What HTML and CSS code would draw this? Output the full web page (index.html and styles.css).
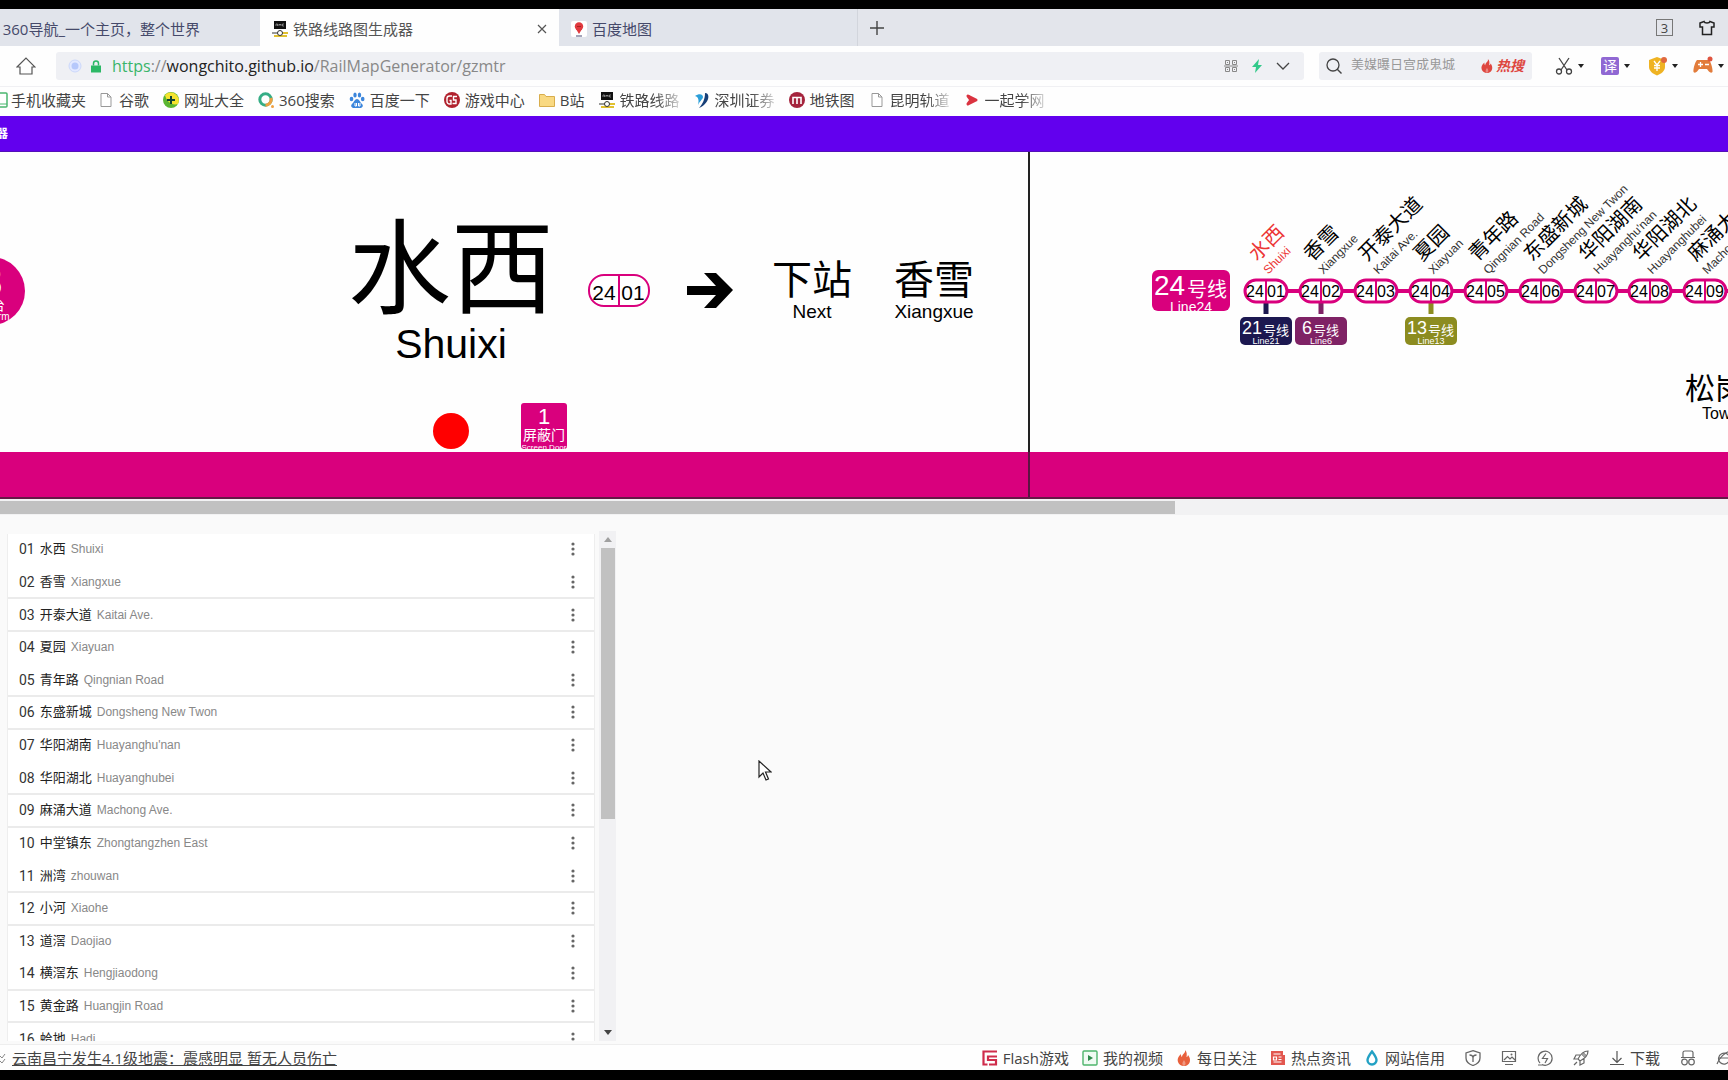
FILE: index.html
```html
<!DOCTYPE html>
<html lang="zh-CN">
<head>
<meta charset="utf-8">
<title>铁路线路图生成器</title>
<link rel="stylesheet" href="styles.css">
</head>
<body>
<svg class="defs" aria-hidden="true">
  <symbol id="i-rmg" viewBox="0 0 16 16"><path fill="#111" d="M2 0h12v8H2z"/><path d="M4 5V3h1.500v2M7 5V3l1 1 1-1v2M12 3h-1.500v2H12" stroke="#aaa" fill="none" stroke-width=".7"/><path fill="#999" d="M0 11h6v2H0z"/><path fill="#e0c030" d="M10 11h6v2h-6zM2 14h13v2H2z"/><circle cx="8" cy="12" r="2.500" fill="#fff" stroke="#333"/></symbol>
  <symbol id="i-page" viewBox="0 0 16 16"><path d="M3 1.500h6.500l3.500 3.500v9.500H3zM9.500 1.500V5H13" fill="#fff" stroke="#999"/></symbol>
  <symbol id="i-caret" viewBox="0 0 6 4"><path d="M0 0h6L3 4z" fill="#222"/></symbol>
  <symbol id="i-flame" viewBox="0 0 16 16"><path d="M9 0c1 3-3 4-3 7C5 6.500 5 5 5 4 2 7 1 9 2 12c1 2.500 3 4 6 4s6-2 6-6c0-2-1-4-2-5-.2 1-.6 2-1.500 2C11 4 11 2 9 0z" fill="currentColor"/><path d="M8 16c-3-2-1-4 0-6 1 2 3 4 0 6z" fill="#fff" opacity=".35"/></symbol>
  <symbol id="i-dots" viewBox="0 0 4 14"><circle cx="2" cy="2" r="1.600"/><circle cx="2" cy="7" r="1.600"/><circle cx="2" cy="12" r="1.600"/></symbol>
</svg>

<header class="browser">
  <nav class="tabs">
    <a class="tab tab-first" href="#"><span>360导航_一个主页，整个世界</span></a>
    <a class="tab tab-active" href="#"><svg class="i16"><use href="#i-rmg"/></svg><span>铁路线路图生成器</span>
      <svg class="tab-close" viewBox="0 0 10 10"><path d="M1 1l8 8M9 1L1 9" stroke="#555" stroke-width="1.200"/></svg></a>
    <a class="tab tab-map" href="#"><svg class="i16" viewBox="0 0 16 16"><rect width="16" height="16" rx="2" fill="#fff"/><circle cx="8" cy="5.500" r="4.200" fill="#e0393e"/><path d="M5 8l3 5 3-5z" fill="#e0393e"/><path d="M5 15h6" stroke="#668" stroke-width="1.200"/><path d="M6 5.500h4" stroke="#a22"/></svg><span>百度地图</span></a>
    <button class="plain" aria-label="新标签页"><svg class="plus" viewBox="0 0 14 14"><path d="M7 0v14M0 7h14" stroke="#444" stroke-width="1.400"/></svg></button>
    <div class="tabs-right"><span class="count">3</span>
      <svg class="i16" viewBox="0 0 16 16"><path d="M1 3l4-1.500c.5 2 5.500 2 6 0L15 3v4h-2.500v7.500h-9V7H1z" fill="none" stroke="#222" stroke-width="1.500"/></svg></div>
  </nav>

  <div class="address">
    <button class="plain home" aria-label="主页"><svg class="i20" viewBox="0 0 20 20"><path d="M1 11L10 2l9 9h-3v7H4v-7z" fill="none" stroke="#555" stroke-width="1.200"/></svg></button>
    <div class="url">
      <svg class="i14" viewBox="0 0 14 14"><circle cx="7" cy="7" r="6" fill="#e3e9ff" stroke="#ccd8fb"/><circle cx="7" cy="7" r="3.500" fill="#b6c8fb"/></svg>
      <svg class="lock" viewBox="0 0 10 12"><path d="M0 5h10v7H0z" fill="#2cb866"/><path d="M2.500 5V3a2.500 2.500 0 015 0v2" fill="none" stroke="#2cb866" stroke-width="1.500"/></svg>
      <span class="url-text"><span class="scheme">https</span><span class="dim">://</span><b>wongchito.github.io</b><span class="dim">/RailMapGenerator/gzmtr</span></span>
      <svg class="i14 push" viewBox="0 0 14 14"><path d="M1.500 1.500h4v4h-4zM8.500 1.500h4v4h-4zM1.500 8.500h4v4h-4zM8.500 8.500h4v4h-4zM0 7h14M3 3.500h1M10 3.500h1M3 10.500h1M10 10.500h1" fill="none" stroke="#888"/></svg>
      <svg class="i14" viewBox="0 0 14 14"><path d="M9 0L2 8h4l-1 6 7-8H8z" fill="#32c98a"/></svg>
      <svg class="i14" viewBox="0 0 14 14"><path d="M1 4l6 6 6-6" fill="none" stroke="#444" stroke-width="1.300"/></svg>
    </div>
    <label class="search">
      <svg class="i16" viewBox="0 0 16 16"><circle cx="7" cy="7" r="6" fill="none" stroke="#444" stroke-width="1.300"/><path d="M11 11l4.500 4.500" stroke="#444" stroke-width="1.400"/></svg>
      <input type="text" placeholder="美媒曝日宫成鬼城" aria-label="搜索">
      <span class="hot"><svg class="i14"><use href="#i-flame"/></svg>热搜</span>
    </label>
    <div class="tools">
      <button class="plain tool" aria-label="截图"><svg class="i18" viewBox="0 0 18 18"><path d="M4 1l8 12M14 1L6 13" stroke="#444" stroke-width="1.300"/><circle cx="4" cy="14.500" r="2.500" fill="none" stroke="#444" stroke-width="1.300"/><circle cx="14" cy="14.500" r="2.500" fill="none" stroke="#444" stroke-width="1.300"/></svg><svg class="caret"><use href="#i-caret"/></svg></button>
      <button class="plain tool"><span class="trans">译</span><svg class="caret"><use href="#i-caret"/></svg></button>
      <button class="plain tool" aria-label="钱盾"><svg class="i20" viewBox="0 0 20 20"><path d="M10 1l8 3v7c0 4-4 7-8 8.500C6 18 2 15 2 11V4z" fill="#efb323"/><path d="M7 5l3 4 3-4M10 9v6M7 9.500h6M7 12h6" stroke="#fff" fill="none" stroke-width="1.300"/><circle cx="17" cy="4" r="3" fill="#e0693f"/></svg><svg class="caret"><use href="#i-caret"/></svg></button>
      <button class="plain tool" aria-label="游戏"><svg class="i20" viewBox="0 0 20 20"><path d="M4 4h12c2 2 4 9 3.500 12-2 2-4-1-5.500-3H6c-1.500 2-3.500 5-5.500 3C0 13 2 6 4 4z" fill="#e27c3b"/><path d="M5 8.500h5M7.500 6v5M12 8.500h4" stroke="#fff" stroke-width="1.300"/><circle cx="17" cy="3" r="2.500" fill="#e0543f"/></svg><svg class="caret"><use href="#i-caret"/></svg></button>
    </div>
  </div>

  <nav class="bookmarks">
    <a class="bm bm-cut" href="#"><span class="cut8"><svg class="i16" viewBox="0 0 16 16"><rect x="4" y="1" width="11" height="14" rx="1" fill="#fff" stroke="#4bb66f" stroke-width="1.500"/><path d="M4 12h11" stroke="#4bb66f"/></svg></span>手机收藏夹</a>
    <a class="bm" href="#"><svg class="i16"><use href="#i-page"/></svg>谷歌</a>
    <a class="bm" href="#"><svg class="i16" viewBox="0 0 16 16"><circle cx="8" cy="8" r="8" fill="#5bb531"/><path d="M2 3a8 8 0 0113 9C9 14 3 9 2 3z" fill="#f5e32e"/><path d="M8 4v8M4 8h8" stroke="#143" stroke-width="2"/></svg>网址大全</a>
    <a class="bm" href="#"><svg class="i16" viewBox="0 0 16 16"><circle cx="7.500" cy="7.500" r="5.700" fill="none" stroke="#35ad85" stroke-width="3"/><path d="M7.500 13.200A5.700 5.700 0 0013 6" fill="none" stroke="#f0a040" stroke-width="3"/><circle cx="14.500" cy="14.500" r="1.500" fill="#f0a040"/></svg>360搜索</a>
    <a class="bm" href="#"><svg class="i16" viewBox="0 0 16 16"><g fill="#3c86dc"><ellipse cx="2.500" cy="7" rx="1.800" ry="2.300"/><ellipse cx="6" cy="3" rx="1.700" ry="2.500"/><ellipse cx="10.500" cy="3" rx="1.700" ry="2.500"/><ellipse cx="13.700" cy="7" rx="1.800" ry="2.300"/><path d="M8 7c2 0 3 3 5 5s0 4-2 4H5c-2 0-4-2-2-4S6 7 8 7z"/></g><path d="M6 11v3h1.500v-3M9.500 11v3H11v-3" stroke="#fff" fill="none"/></svg>百度一下</a>
    <a class="bm" href="#"><svg class="i16" viewBox="0 0 16 16"><circle cx="8" cy="8" r="8" fill="#b1222e"/><path d="M8 4H5.500A2.500 2.500 0 003 6.500v3A2.500 2.500 0 005.500 12H7V8.500H5.500M13 4.500H9.500V8H12v3.500H8.500" fill="none" stroke="#fff" stroke-width="1.400"/></svg>游戏中心</a>
    <a class="bm" href="#"><svg class="i16" viewBox="0 0 16 16"><path d="M.5 2.500h5l1.500 2h8.500v10H.5z" fill="#f9d982" stroke="#d8ad4c"/></svg>B站</a>
    <a class="bm" href="#"><svg class="i16"><use href="#i-rmg"/></svg><span class="fade">铁路线路</span></a>
    <a class="bm" href="#"><svg class="i16" viewBox="0 0 16 16"><path d="M1 4c4-3 8-2 8 1 0 2-4 5-5 8C5 9 5 5 1 4z" fill="#2b9ed8"/><path d="M11 1c6 0 4 11-6 15 4-5 6-9 6-15z" fill="#173f78"/></svg><span class="fade">深圳证券</span></a>
    <a class="bm" href="#"><svg class="i16" viewBox="0 0 16 16"><circle cx="8" cy="8" r="8" fill="#a5243d"/><path d="M4 12V5.500h8V12M8 5.500V12" fill="none" stroke="#fff" stroke-width="1.600"/></svg>地铁图</a>
    <a class="bm" href="#"><svg class="i16"><use href="#i-page"/></svg><span class="fade">昆明轨道</span></a>
    <a class="bm" href="#"><svg class="i16" viewBox="0 0 16 16"><path d="M4 4l8 4-8 4 3-4z" fill="#da3340" stroke="#da3340" stroke-width="3" stroke-linejoin="round"/></svg><span class="fade">一起学网</span></a>
  </nav>
</header>

<div class="appbar"><span class="app-title">器</span></div>

<section class="sign">
<svg class="sign-map" width="2543" height="347" viewBox="0 152 2543 347">
  <defs>
    <g id="pill"><rect x="-21" y="280" width="42" height="22" rx="11" fill="#fff" stroke="#d9007d" stroke-width="3"/><path d="M0 280v22" stroke="#d9007d" stroke-width="2"/></g>
  </defs>
  <rect x="0" y="452" width="2543" height="46" fill="#d9007d"/>
  <path d="M1029 152v300" stroke="#222" stroke-width="2"/><path d="M1029 452v46" stroke="#5c1442" stroke-width="2"/>
  <path d="M0 498h2543" stroke="#651846" stroke-width="2"/>

  <circle cx="-9" cy="291" r="34" fill="#d9007d"/>
  <g fill="#fff" class="mid"><text x="-9" y="296" font-size="42">8</text><text x="-9" y="310" font-size="14">站台</text><text x="-9" y="320" font-size="10">Platform</text></g>

  <g class="mid"><text x="451" y="306" font-size="103">水西</text><text x="451" y="358" font-size="41">Shuixi</text></g>
  <circle cx="451" cy="431" r="18" fill="#f00"/>
  <rect x="521" y="403" width="46" height="46" rx="3" fill="#d9007d"/>
  <g fill="#fff" class="mid"><text x="544" y="424" font-size="22">1</text><text x="544" y="440" font-size="14">屏蔽门</text><text x="544" y="450" font-size="8">Screen Door</text></g>

  <rect x="589" y="275" width="60" height="31" rx="15" fill="#fff" stroke="#d9007d" stroke-width="2"/><path d="M619 275v31" stroke="#d9007d" stroke-width="2"/>
  <g class="mid"><text x="604" y="300" font-size="21">24</text><text x="633" y="300" font-size="21">01</text></g>
  <path d="M704 273h12l17 17-17 18h-12l12-13h-29v-9h29z"/>
  <g class="mid"><text x="812" y="294" font-size="40">下站</text><text x="812" y="318" font-size="19">Next</text><text x="934" y="294" font-size="40">香雪</text><text x="934" y="318" font-size="19">Xiangxue</text></g>

  <rect x="1152" y="270" width="78" height="41" rx="6" fill="#d9007d"/>
  <g fill="#fff"><text x="1154" y="295" font-size="28">24</text><text x="1187" y="297" font-size="20">号线</text><text class="mid" x="1191" y="312" font-size="14">Line24</text></g>

  <path d="M1266 291h462" stroke="#d9007d" stroke-width="4"/>
  <g stroke-width="5"><path d="M1266 302v12" stroke="#1c1850"/><path d="M1321 302v12" stroke="#7f2265"/><path d="M1431 302v12" stroke="#8c8c20"/></g>
  <use href="#pill" x="1266"/><use href="#pill" x="1321"/><use href="#pill" x="1376"/><use href="#pill" x="1431"/><use href="#pill" x="1486"/><use href="#pill" x="1541"/><use href="#pill" x="1596"/><use href="#pill" x="1650"/><use href="#pill" x="1705"/>
  <g class="mid" font-size="16">
    <text x="1255" y="297">24</text><text x="1276" y="297">01</text>
    <text x="1310" y="297">24</text><text x="1331" y="297">02</text>
    <text x="1365" y="297">24</text><text x="1386" y="297">03</text>
    <text x="1420" y="297">24</text><text x="1441" y="297">04</text>
    <text x="1475" y="297">24</text><text x="1496" y="297">05</text>
    <text x="1530" y="297">24</text><text x="1551" y="297">06</text>
    <text x="1585" y="297">24</text><text x="1606" y="297">07</text>
    <text x="1639" y="297">24</text><text x="1660" y="297">08</text>
    <text x="1694" y="297">24</text><text x="1715" y="297">09</text>
  </g>
  <rect x="1240" y="317" width="52" height="28" rx="5" fill="#1c1850"/><rect x="1295" y="317" width="52" height="28" rx="5" fill="#7f2265"/><rect x="1405" y="317" width="52" height="28" rx="5" fill="#8c8c20"/>
  <g fill="#fff">
    <text x="1242" y="334" font-size="18">21</text><text x="1263" y="335" font-size="13">号线</text><text class="mid" x="1266" y="344" font-size="9">Line21</text>
    <text x="1302" y="334" font-size="18">6</text><text x="1313" y="335" font-size="13">号线</text><text class="mid" x="1321" y="344" font-size="9">Line6</text>
    <text x="1407" y="334" font-size="18">13</text><text x="1428" y="335" font-size="13">号线</text><text class="mid" x="1431" y="344" font-size="9">Line13</text>
  </g>
  <g class="st current" transform="translate(1257 262) rotate(-45)"><text>水西</text><text class="en" x="-1" y="17">Shuixi</text></g>
  <g class="st" transform="translate(1312 262) rotate(-45)"><text>香雪</text><text class="en" x="-1" y="17">Xiangxue</text></g>
  <g class="st" transform="translate(1367 262) rotate(-45)"><text>开泰大道</text><text class="en" x="-1" y="17">Kaitai Ave.</text></g>
  <g class="st" transform="translate(1422 262) rotate(-45)"><text>夏园</text><text class="en" x="-1" y="17">Xiayuan</text></g>
  <g class="st" transform="translate(1477 262) rotate(-45)"><text>青年路</text><text class="en" x="-1" y="17">Qingnian Road</text></g>
  <g class="st" transform="translate(1532 262) rotate(-45)"><text>东盛新城</text><text class="en" x="-1" y="17">Dongsheng New Twon</text></g>
  <g class="st" transform="translate(1587 262) rotate(-45)"><text>华阳湖南</text><text class="en" x="-1" y="17">Huayanghu'nan</text></g>
  <g class="st" transform="translate(1641 262) rotate(-45)"><text>华阳湖北</text><text class="en" x="-1" y="17">Huayanghubei</text></g>
  <g class="st" transform="translate(1696 262) rotate(-45)"><text>麻涌大道</text><text class="en" x="-1" y="17">Machong Ave.</text></g>
  <text x="1685" y="399" font-size="30">松岗方向</text><text x="1702" y="419" font-size="16">Towards Songgang</text>
</svg>
</section>
<div class="hscroll"><div class="hthumb"></div></div>

<main class="panel">
  <div class="list-view">
    <ol class="stations">
      <li><span class="no">01</span><span class="zh">水西</span><span class="en-name">Shuixi</span><button class="plain more" aria-label="更多"><svg><use href="#i-dots"/></svg></button></li>
      <li><span class="no">02</span><span class="zh">香雪</span><span class="en-name">Xiangxue</span><button class="plain more" aria-label="更多"><svg><use href="#i-dots"/></svg></button></li>
      <li><span class="no">03</span><span class="zh">开泰大道</span><span class="en-name">Kaitai Ave.</span><button class="plain more" aria-label="更多"><svg><use href="#i-dots"/></svg></button></li>
      <li><span class="no">04</span><span class="zh">夏园</span><span class="en-name">Xiayuan</span><button class="plain more" aria-label="更多"><svg><use href="#i-dots"/></svg></button></li>
      <li><span class="no">05</span><span class="zh">青年路</span><span class="en-name">Qingnian Road</span><button class="plain more" aria-label="更多"><svg><use href="#i-dots"/></svg></button></li>
      <li><span class="no">06</span><span class="zh">东盛新城</span><span class="en-name">Dongsheng New Twon</span><button class="plain more" aria-label="更多"><svg><use href="#i-dots"/></svg></button></li>
      <li><span class="no">07</span><span class="zh">华阳湖南</span><span class="en-name">Huayanghu'nan</span><button class="plain more" aria-label="更多"><svg><use href="#i-dots"/></svg></button></li>
      <li><span class="no">08</span><span class="zh">华阳湖北</span><span class="en-name">Huayanghubei</span><button class="plain more" aria-label="更多"><svg><use href="#i-dots"/></svg></button></li>
      <li><span class="no">09</span><span class="zh">麻涌大道</span><span class="en-name">Machong Ave.</span><button class="plain more" aria-label="更多"><svg><use href="#i-dots"/></svg></button></li>
      <li><span class="no">10</span><span class="zh">中堂镇东</span><span class="en-name">Zhongtangzhen East</span><button class="plain more" aria-label="更多"><svg><use href="#i-dots"/></svg></button></li>
      <li><span class="no">11</span><span class="zh">洲湾</span><span class="en-name">zhouwan</span><button class="plain more" aria-label="更多"><svg><use href="#i-dots"/></svg></button></li>
      <li><span class="no">12</span><span class="zh">小河</span><span class="en-name">Xiaohe</span><button class="plain more" aria-label="更多"><svg><use href="#i-dots"/></svg></button></li>
      <li><span class="no">13</span><span class="zh">道滘</span><span class="en-name">Daojiao</span><button class="plain more" aria-label="更多"><svg><use href="#i-dots"/></svg></button></li>
      <li><span class="no">14</span><span class="zh">横滘东</span><span class="en-name">Hengjiaodong</span><button class="plain more" aria-label="更多"><svg><use href="#i-dots"/></svg></button></li>
      <li><span class="no">15</span><span class="zh">黄金路</span><span class="en-name">Huangjin Road</span><button class="plain more" aria-label="更多"><svg><use href="#i-dots"/></svg></button></li>
      <li><span class="no">16</span><span class="zh">蛤地</span><span class="en-name">Hadi</span><button class="plain more" aria-label="更多"><svg><use href="#i-dots"/></svg></button></li>
    </ol>
  </div>
  <div class="vscroll"><svg class="arrow" viewBox="0 0 8 5"><path d="M0 5h8L4 0z" fill="#a0a0a0"/></svg><div class="vtrack"><div class="vthumb"></div></div><svg class="arrow" viewBox="0 0 8 5"><path d="M0 0h8L4 5z" fill="#444"/></svg></div>
</main>

<footer class="status">
  <svg class="chev" viewBox="0 0 6 12"><path d="M0 4l2 2 3-4M0 9l2 2 3-4" fill="none" stroke="#888"/></svg>
  <a class="news" href="#">云南昌宁发生4.1级地震：震感明显 暂无人员伤亡</a>
  <div class="links">
    <a class="sl" href="#"><svg class="i16" viewBox="0 0 16 16"><path d="M15 1.500H1.500v13h4M15 6.500H6V10h8v4.500H7" fill="none" stroke="#cf2c4b" stroke-width="2.200"/></svg>Flash游戏</a>
    <a class="sl" href="#"><svg class="i16" viewBox="0 0 16 16"><rect x="1" y="1" width="14" height="14" rx="1" fill="#f0fbf3" stroke="#4eb56c" stroke-width="1.400"/><path d="M6 5l5 3-5 3z" fill="#2f8b4c"/></svg>我的视频</a>
    <a class="sl flame" href="#"><svg class="i16"><use href="#i-flame"/></svg>每日关注</a>
    <a class="sl" href="#"><svg class="i16" viewBox="0 0 16 16"><path d="M1 1h12v4h2v10H1z" fill="#e2574f"/><path d="M3.500 4h7M3.500 12h8M3.500 7h3v3h-3zM8.500 7h3M8.500 9.500h3" stroke="#fff" fill="none" stroke-width="1.200"/></svg>热点资讯</a>
    <a class="sl" href="#"><svg class="i16" viewBox="0 0 16 16"><path d="M8 1.500c3 4 4.500 6 4.500 8.500a4.500 4.500 0 01-9 0C3.500 7.500 5 5.500 8 1.500z" fill="#fff" stroke="#22a1c4" stroke-width="2.400"/></svg>网站信用</a>
    <svg class="i16" viewBox="0 0 16 16"><path d="M8 .7l7 2.300v5c0 4-4 6.500-7 7.500-3-1-7-3.500-7-7.500V3zM8 12V7M4.500 5c2 0 3.500 1 3.500 3 0-2 1.500-3 3.500-3" fill="none" stroke="#666" stroke-width="1.300"/></svg>
    <svg class="i16" viewBox="0 0 16 16"><path d="M1.500 1.500h13v10h-13zM4 14.500h8M3 10l3.500-3.500L9 9l2-2 3 3" fill="none" stroke="#666" stroke-width="1.200"/><circle cx="10.500" cy="4.500" r="1" fill="#666"/></svg>
    <svg class="i16" viewBox="0 0 16 16"><path d="M3 13a7 7 0 112 1.500M9 3.500L5.500 8.500h5L8 13M1 15h5" fill="none" stroke="#666" stroke-width="1.200"/></svg>
    <svg class="i16" viewBox="0 0 16 16"><path d="M15 1c-5 0-8 4-10 8l2 2c4-2 8-5 8-10zM7 5H3L1 9l4 0M11 9v4l-4 2v-4M1 15l3-3" fill="none" stroke="#666" stroke-width="1.200"/><circle cx="11" cy="5" r="1.300" fill="none" stroke="#666"/></svg>
    <a class="sl" href="#"><svg class="i16" viewBox="0 0 16 16"><path d="M8 1v11M3.500 8L8 12.500 12.500 8M1 14.500h14" fill="none" stroke="#555" stroke-width="1.200"/></svg>下载</a>
    <svg class="i16" viewBox="0 0 16 16"><path d="M3 7V2.500C3 1.500 4 1 5 1h6c1 0 2 .5 2 1.500V7M1 7.500h14" fill="none" stroke="#666" stroke-width="1.200"/><circle cx="4.500" cy="12" r="2.800" fill="none" stroke="#666" stroke-width="1.200"/><circle cx="11.500" cy="12" r="2.800" fill="none" stroke="#666" stroke-width="1.200"/></svg>
    <svg class="i16" viewBox="0 0 16 16"><path d="M13 11a5.500 5.500 0 11.500-3H3" fill="none" stroke="#666" stroke-width="1.200"/><path d="M1 14C3 8 9 2 15 1" fill="none" stroke="#666" stroke-width="1.200"/></svg>
  </div>
</footer>

<svg class="cursor" viewBox="0 0 14 22"><path d="M1 1v16l4-4 3 7 2.500-1L7.500 12H13z" fill="#fff" stroke="#222" stroke-width="1.200"/></svg>
</body>
</html>
```
FILE: styles.css
```css
* { box-sizing: border-box; }
body {
  margin: 0; height: 100vh; display: flex; flex-direction: column; overflow: hidden;
  border-top: 9px solid #000; border-bottom: 10px solid #000;
  background: #fafafa; color: #444;
  font: 15px/20px "Open Sans", "Noto Sans CJK SC", sans-serif;
}
a { color: inherit; text-decoration: none; }
svg { flex: none; display: block; }
.defs { display: none; }
.i14 { width: 14px; height: 14px; }
.i16 { width: 16px; height: 16px; }
.i18 { width: 18px; height: 18px; }
.i20 { width: 20px; height: 20px; }
.plain { border: 0; background: none; padding: 0; font: inherit; color: inherit; display: flex; align-items: center; }

.browser, .appbar, .sign, .hscroll, .status { flex: none; }
.browser { background: #fefefe; }
.tabs { display: flex; height: 37px; background: #e3e5eb; white-space: nowrap; }
.tab { display: flex; align-items: center; gap: 5px; width: 299px; padding: 2px 12px 0; background: #e1e4eb; color: #45496a; overflow: hidden; }
.tab-first { width: 260px; padding-right: 60px; justify-content: flex-end; }
.tab-active { background: #fefefe; color: #555; }
.tab-close { width: 10px; height: 10px; margin-left: auto; }
.tab-map { border-right: 1px solid #d2d5dc; }
.plus { width: 14px; height: 14px; margin-left: 12px; }
.tabs-right { margin-left: auto; display: flex; align-items: center; gap: 26px; padding-right: 13px; }
.count { width: 17px; height: 17px; border: 1px solid #777; font-size: 13px; line-height: 16px; text-align: center; }

.address { display: flex; align-items: center; height: 41px; padding-left: 16px; border-bottom: 1px solid #f0f0f3; }
.home { width: 40px; }
.url { flex: 1; display: flex; align-items: center; height: 28px; padding: 0 14px 0 12px; background: #eff0f4; border-radius: 3px; }
.lock { width: 10px; height: 13px; margin: 0 11px 0 9px; }
.url-text { font-size: 16px; }
.url-text b { font-weight: 400; color: #222; }
.scheme { color: #3ab56a; }
.dim { color: #888; }
.push { margin-left: auto; }
.url .i14 + .i14 { margin-left: 12px; }
.search { display: flex; align-items: center; width: 213px; height: 28px; margin-left: 15px; padding: 0 8px 0 7px; background: #eff0f4; border-radius: 3px; }
.search input { flex: 1; min-width: 0; height: 12px; margin: 0 0 5px 9px; padding: 0; border: 0; background: none; font: 13px/12px "Noto Sans CJK SC", sans-serif; }
.search input::placeholder { color: #999; }
.hot { display: flex; align-items: center; gap: 2px; color: #de463f; font-size: 14px; font-weight: 700; font-style: italic; }
.tools { display: flex; align-items: center; gap: 17px; width: 196px; padding-left: 23px; overflow: hidden; }
.tool { gap: 5px; width: 29px; flex: none; }
.caret { width: 6px; height: 4px; }
.trans { width: 18px; height: 18px; border-radius: 2px; background: #9068d3; color: #fff; font-size: 14px; line-height: 17px; text-align: center; }

.bookmarks { display: flex; align-items: center; gap: 14px; height: 29px; padding-bottom: 3px; white-space: nowrap; }
.bm { display: flex; align-items: center; gap: 5px; }
.bm-cut { gap: 3px; margin-right: -2px; }
.cut8 { display: flex; justify-content: flex-end; width: 8px; overflow: hidden; }
.fade { -webkit-mask-image: linear-gradient(90deg, #000 60%, rgba(0,0,0,.2)); mask-image: linear-gradient(90deg, #000 60%, rgba(0,0,0,.2)); }

.appbar { display: flex; align-items: center; height: 36px; background: #6200ee; color: #fff; border-bottom: 1px solid #5310b8; }
.app-title { display: flex; justify-content: flex-end; width: 8px; overflow: hidden; font-size: 12px; font-weight: 700; }

.sign { overflow: hidden; background: #fefefe; }
.sign-map { font-family: "Liberation Sans", "Noto Sans CJK SC", sans-serif; fill: #000; }
.mid { text-anchor: middle; }
.st { font-size: 20px; }
.st .en { font-size: 12px; fill: #333; }
.current, .current .en { fill: #ec3434; }
.hscroll { height: 16px; padding: 2px 0; background: #f2f2f3; }
.hthumb { width: 68%; height: 13px; background: #c1c1c1; }

.panel { flex: 1; min-height: 0; display: flex; gap: 4px; padding: 16px 0 3px 7px; }
.list-view { width: 588px; overflow: hidden; margin-top: 3px; border: 1px solid #eee; border-width: 0 1px; background: #fff; }
.stations { display: grid; grid-auto-rows: 1fr; height: 522px; margin: 0; padding: 0; list-style: none; font-family: "Liberation Sans", "Noto Sans CJK SC", sans-serif; }
.stations li { display: flex; align-items: center; gap: 5px; min-height: 0; padding: 0 19px 0 11px; border-bottom: 2px solid transparent; }
.stations li:not(:nth-child(3n+1)) { border-bottom-color: #ebebeb; }
.no { font-size: 14px; font-family: Roboto, sans-serif; color: #333; }
.zh { font-size: 13px; color: #222; }
.en-name { font-size: 12px; color: #888; }
.more { margin-left: auto; }
.more svg { width: 4px; height: 14px; fill: #666; }
.vscroll { display: flex; flex-direction: column; align-items: center; width: 17px; background: #f1f1f3; }
.arrow { width: 8px; height: 5px; margin: 6px 0; }
.vtrack { flex: 1; width: 14px; }
.vthumb { height: 57%; background: #c1c1c1; }

.status { display: flex; align-items: center; height: 26px; background: #fefefe; border-top: 1px solid #eee; white-space: nowrap; }
.chev { width: 6px; height: 12px; margin-right: 6px; }
.news { text-decoration: underline; font-size: 15px; }
.links { margin-left: auto; display: flex; align-items: center; gap: 20px; margin-right: -4px; }
.sl { display: flex; align-items: center; gap: 5px; }
.sl + .sl { margin-left: -7px; }
.flame { color: #444; }
.flame svg { color: #e8603c; }
.hot svg { color: #de463f; }
.cursor { position: absolute; left: 758px; top: 760px; width: 14px; height: 22px; }
```
